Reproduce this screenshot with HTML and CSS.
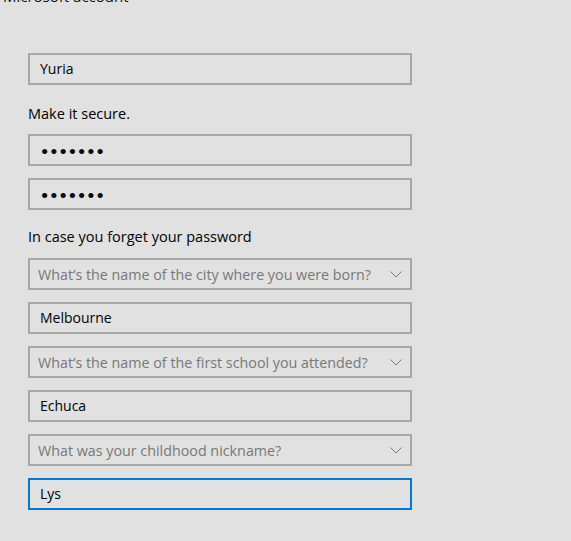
FILE: index.html
```html
<!DOCTYPE html>
<html lang="en">
<head>
<meta charset="utf-8">
<title>Microsoft account</title>
<link rel="stylesheet" href="styles.css">
</head>
<body>
<div class="page">
  <div class="title">Microsoft account</div>
  <form class="form">
    <div class="field"><span class="value">Yuria</span></div>
    <div class="label">Make it secure.</div>
    <div class="field"><span class="dots">•••••••</span></div>
    <div class="field"><span class="dots">•••••••</span></div>
    <div class="label label-2">In case you forget your password</div>
    <div class="field select"><span class="placeholder">What’s the name of the city where you were born?</span>
      <svg class="chev" width="12" height="7" viewBox="0 0 12 7"><polyline points="0.5,0.5 6,6 11.5,0.5" fill="none" stroke="#7a7a7a" stroke-width="1"/></svg></div>
    <div class="field"><span class="value">Melbourne</span></div>
    <div class="field select"><span class="placeholder">What’s the name of the first school you attended?</span>
      <svg class="chev" width="12" height="7" viewBox="0 0 12 7"><polyline points="0.5,0.5 6,6 11.5,0.5" fill="none" stroke="#7a7a7a" stroke-width="1"/></svg></div>
    <div class="field"><span class="value">Echuca</span></div>
    <div class="field select"><span class="placeholder">What was your childhood nickname?</span>
      <svg class="chev" width="12" height="7" viewBox="0 0 12 7"><polyline points="0.5,0.5 6,6 11.5,0.5" fill="none" stroke="#7a7a7a" stroke-width="1"/></svg></div>
    <div class="field focused"><span class="value">Lys</span></div>
  </form>
</div>
</body>
</html>
```

FILE: styles.css
```css
html, body {
  margin: 0;
  padding: 0;
  background: #e1e1e1;
  height: 100%;
  overflow: hidden;
}
body {
  font-family: "Open Sans", "Noto Sans", sans-serif;
  color: #000;
}
.page {
  padding-left: 3px;
}
.title {
  font-size: 15px;
  line-height: 20px;
  margin-top: -14px;
  height: 20px;
  color: #111;
}
.form {
  display: flex;
  flex-direction: column;
  width: 384px;
  margin-left: 25px;
  margin-top: 47px;
}
.field {
  box-sizing: border-box;
  height: 32px;
  border: 2px solid #a8a8a8;
  margin-bottom: 12px;
  display: flex;
  align-items: center;
  padding: 0 8px 0 10px;
  font-size: 14px;
}
.field.select {
  padding-left: 8px;
}
.field.focused {
  border-color: #0078d7;
}
.value {
  color: #000;
  margin-top: -1px;
}
.placeholder {
  color: #787878;
  flex: 1;
  white-space: nowrap;
  font-size: 14.3px;
}
.dots {
  font-size: 14.5px;
  letter-spacing: 0;
  font-weight: bold;
  font-family: "DejaVu Sans", sans-serif;
  margin-top: 3px;
}
.chev {
  flex: none;
}
.label {
  font-size: 14.5px;
  line-height: 20px;
  margin-top: 7px;
  margin-bottom: 10px;
}
.label-2 {
  margin-top: 5px;
  margin-bottom: 11px;
}
```
